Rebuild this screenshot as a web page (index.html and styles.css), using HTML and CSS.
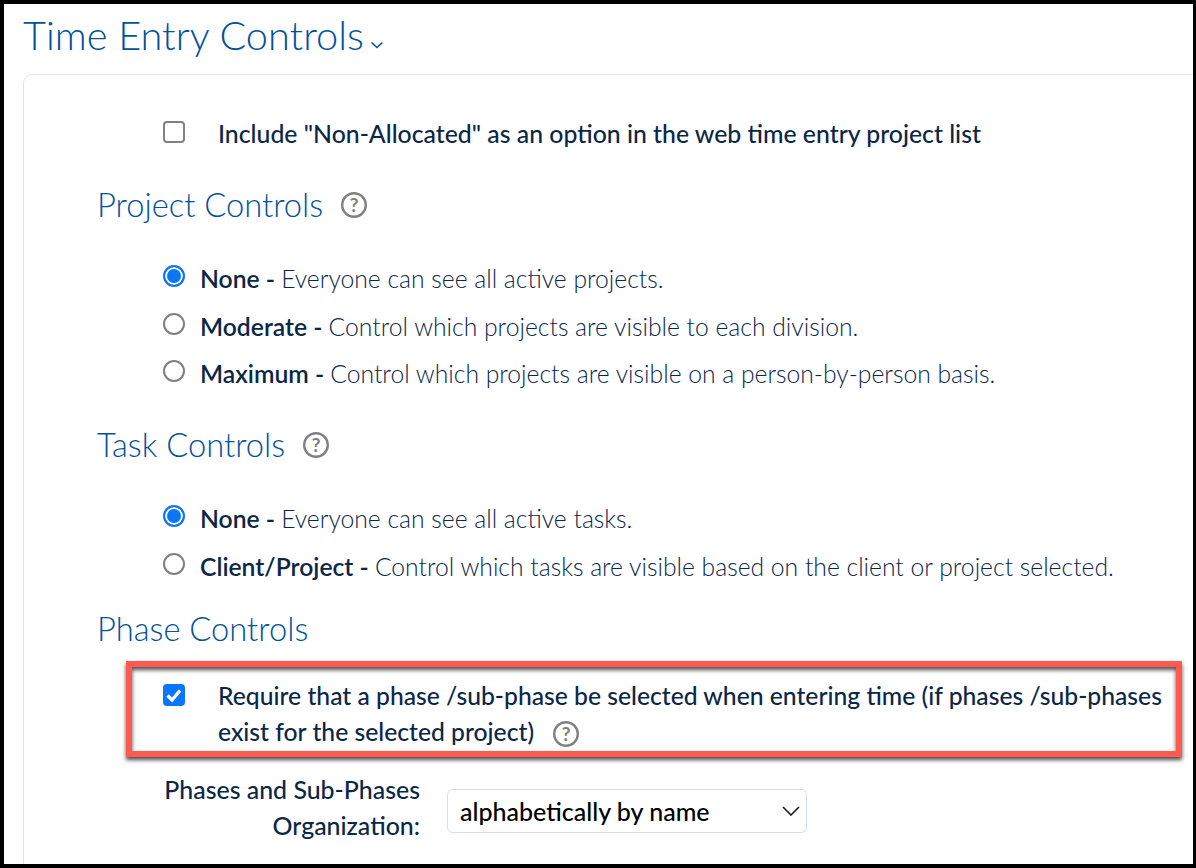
FILE: index.html
```html
<!DOCTYPE html>
<html lang="en">
<head>
  <meta charset="UTF-8">
  <title>Time Entry Controls</title>
  <link rel="stylesheet" href="styles.css">
</head>
<body>
  <div class="frame">
    <h1 class="page-title">Time Entry Controls<svg class="chevron" viewBox="0 0 14 8" width="14" height="8"><path d="M1.5 1.5 7 6.5l5.5-5" fill="none" stroke="#00529b" stroke-width="1.5"/></svg></h1>
    <div class="card">
      <label class="check-row first-check">
        <span class="checkbox"></span>
        <span class="check-text">Include "Non-Allocated" as an option in the web time entry project list</span>
      </label>

      <h2 class="section-title">Project Controls <svg class="help" viewBox="0 0 26 26" width="26" height="26"><circle cx="13" cy="13" r="11.8" fill="none" stroke="#808080" stroke-width="2.4"/><text x="13" y="19.5" text-anchor="middle" class="help-mark">?</text></svg></h2>
      <div class="radio-group">
        <label class="radio-row"><span class="radio on"></span><span><b>None - </b>Everyone can see all active projects.</span></label>
        <label class="radio-row"><span class="radio"></span><span><b>Moderate - </b>Control which projects are visible to each division.</span></label>
        <label class="radio-row"><span class="radio"></span><span><b>Maximum - </b>Control which projects are visible on a person-by-person basis.</span></label>
      </div>

      <h2 class="section-title task-title">Task Controls <svg class="help" viewBox="0 0 26 26" width="26" height="26"><circle cx="13" cy="13" r="11.8" fill="none" stroke="#808080" stroke-width="2.4"/><text x="13" y="19.5" text-anchor="middle" class="help-mark">?</text></svg></h2>
      <div class="radio-group">
        <label class="radio-row"><span class="radio on"></span><span><b>None - </b>Everyone can see all active tasks.</span></label>
        <label class="radio-row"><span class="radio"></span><span><b>Client/Project - </b>Control which tasks are visible based on the client or project selected.</span></label>
      </div>

      <h2 class="section-title phase-title">Phase Controls</h2>
      <div class="callout">
        <label class="check-row">
          <span class="checkbox checked"><svg viewBox="0 0 22 22" width="22" height="22"><path d="M4.5 11.5 9 16 17 6.5" fill="none" stroke="#fff" stroke-width="3.4"/></svg></span>
          <span class="check-text">Require that a phase /sub-phase be selected when entering time (if phases /sub-phases exist for the selected project) <svg class="help small" viewBox="0 0 26 26" width="26" height="26"><circle cx="13" cy="13" r="11.8" fill="none" stroke="#808080" stroke-width="2.4"/><text x="13" y="19.5" text-anchor="middle" class="help-mark">?</text></svg></span>
        </label>
      </div>
      <div class="select-row">
        <label class="select-label">Phases and Sub-Phases Organization:</label>
        <div class="select-box"><span class="select-value">alphabetically by name</span><svg viewBox="0 0 18 10" width="18" height="10"><path d="M1 1 9 9l8-8" fill="none" stroke="#1a1a1a" stroke-width="1.6"/></svg></div>
      </div>
    </div>
  </div>
</body>
</html>
```

FILE: styles.css
```css
html, body {
  margin: 0;
  padding: 0;
}

body {
  font-family: Lato, "Open Sans", sans-serif;
  color: #0b2747;
  background: #fff;
}

.frame {
  box-sizing: border-box;
  width: 1196px;
  height: 868px;
  border: 4px solid #000;
  border-right-width: 3px;
  padding: 0 0 0 19px;
  overflow: hidden;
}

.page-title {
  margin: 6px 0 0;
  height: 64px;
  font-size: 39.7px;
  line-height: 50px;
  font-weight: 300;
  color: #00529b;
}

.chevron {
  margin-left: 6px;
  vertical-align: 1px;
}

.card {
  box-sizing: border-box;
  width: 1200px;
  height: 800px;
  border: 1px solid #dfe5ec;
  border-radius: 9px;
  padding: 41px 0 0 73px;
}

.check-row {
  display: flex;
  align-items: flex-start;
}

.first-check {
  margin-left: 66px;
}

.checkbox {
  flex: none;
  box-sizing: border-box;
  width: 22px;
  height: 22px;
  margin-top: 5px;
  border: 2px solid #808080;
  border-radius: 4px;
}

.checkbox.checked {
  margin-top: 6px;
  background: #0a75ff;
  border: none;
}

.checkbox svg {
  display: block;
}

.check-text {
  margin-left: 33px;
  font-size: 24.8px;
  line-height: 36px;
  font-weight: 500;
}

.section-title {
  margin: 33px 0 0;
  font-size: 32.7px;
  line-height: 40px;
  font-weight: 300;
  color: #00529b;
  display: flex;
  align-items: center;
}

.help {
  margin-left: 18px;
}

.help.small {
  display: inline-block;
  vertical-align: -6px;
  margin-left: 13px;
}

.help-mark {
  font-family: Lato, sans-serif;
  font-size: 19px;
  font-weight: 700;
  fill: #808080;
}

.radio-group {
  margin: 36px 0 0 66px;
}

.radio-row {
  display: flex;
  align-items: flex-start;
  height: 47.5px;
  font-size: 24.7px;
  line-height: 36px;
  font-weight: 300;
}

.radio-row b {
  font-weight: 600;
}

.radio {
  flex: none;
  box-sizing: border-box;
  width: 22px;
  height: 22px;
  margin: 4px 15px 0 0;
  border: 2px solid #808080;
  border-radius: 50%;
}

.radio.on {
  border-color: #0a75ff;
  background: #0a75ff;
  box-shadow: inset 0 0 0 2px #fff;
}

.task-title {
  margin-top: 21.5px;
}

.phase-title {
  margin-top: 12.5px;
}

.callout {
  box-sizing: border-box;
  width: 1056px;
  height: 96px;
  margin: 12px 0 0 29px;
  padding: 11px 0 0 31px;
  border: 6px solid #ff5a4f;
  box-shadow: 0 3px 4px rgba(0, 0, 0, 0.7), inset 0 3px 4px rgba(0, 0, 0, 0.7);
}

.callout .check-text {
  font-size: 24.7px;
}

.select-row {
  display: flex;
  align-items: flex-start;
  margin-top: 14px;
}

.select-label {
  width: 323px;
  font-size: 24.9px;
  line-height: 36px;
  font-weight: 500;
  text-align: right;
}

.select-box {
  box-sizing: border-box;
  display: flex;
  align-items: center;
  justify-content: space-between;
  width: 360px;
  height: 44px;
  margin: 18px 0 0 27px;
  padding: 0 6px 0 12px;
  border: 1px solid #d5dde6;
  border-radius: 6px;
  font-size: 25px;
  font-weight: 500;
  color: #000;
}

.select-value {
  padding-top: 1px;
}
```
